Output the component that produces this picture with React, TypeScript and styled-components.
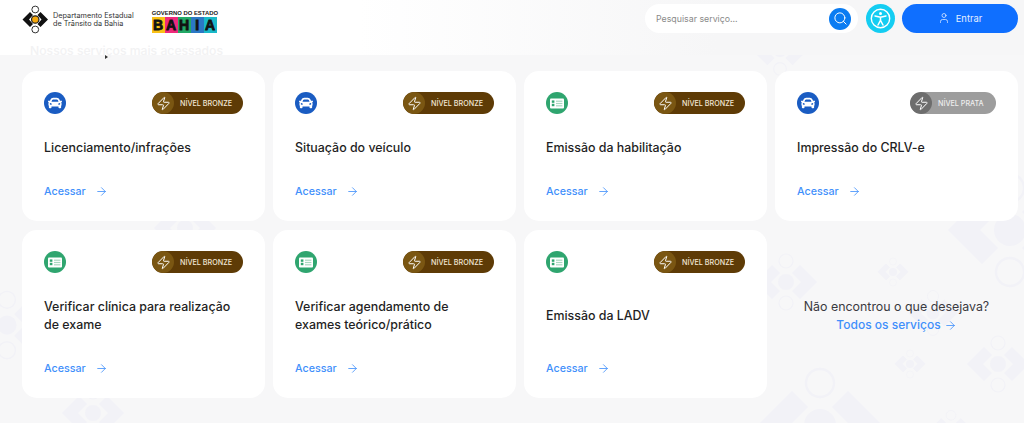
import React from "react";
import styled, { createGlobalStyle } from "styled-components";
import { ArrowRight, Search, User, Zap } from "lucide-react";
import { FaCar } from "react-icons/fa";

const GlobalStyle = createGlobalStyle`
  html, body {
    margin: 0;
    padding: 0;
    height: 100%;
    background: #f7f7f8;
    font-family: "Inter", "Liberation Sans", sans-serif;
    overflow: hidden;
  }
  * { box-sizing: border-box; }
`;

const Page = styled.div`
  position: relative;
  width: 1024px;
  height: 423px;
  overflow: hidden;
  background: #f7f7f8;
`;

const Pattern = styled.svg`
  position: absolute;
  inset: 0;
  width: 1024px;
  height: 423px;
`;

const Header = styled.header`
  position: relative;
  height: 55px;
  display: flex;
  align-items: flex-start;
  justify-content: space-between;
  padding: 3px 6px 0 22px;
  background: linear-gradient(90deg, #ffffff 0%, #ffffff 35%, #f6f6f7 70%, #f6f6f7 100%);
`;

const Brand = styled.div`
  display: flex;
  align-items: center;
  gap: 19px;
  height: 33px;
`;

const Detran = styled.div`
  display: flex;
  align-items: center;
  gap: 4px;
`;

const DetranName = styled.div`
  font-size: 7.3px;
  line-height: 7.6px;
  color: #333;
  white-space: nowrap;
`;

const BahiaLogo = styled.div`
  display: flex;
  flex-direction: column;
  width: 65px;
  margin-left: -1px;
  padding-top: 4px;
`;

const BahiaTop = styled.div`
  font-family: "Liberation Sans", sans-serif;
  font-size: 5.9px;
  font-weight: 700;
  line-height: 7px;
  color: #1a1a1a;
  white-space: nowrap;
`;

const BahiaWord = styled.div`
  display: flex;
  height: 16px;
  background: #111;
`;

const BahiaLetter = styled.span<{ $color: string }>`
  flex: 1;
  text-align: center;
  font-family: "Liberation Sans", sans-serif;
  font-size: 14px;
  font-weight: 700;
  line-height: 16px;
  color: #111;
  -webkit-text-stroke: 0.8px #111;
  background: ${({ $color }) => $color};
`;

const Actions = styled.div`
  display: flex;
  align-items: center;
  height: 30px;
`;

const SearchBox = styled.div`
  width: 213px;
  height: 29px;
  margin-top: 1px;
  display: flex;
  align-items: center;
  justify-content: space-between;
  padding: 0 7px 0 11px;
  border-radius: 15px;
  background: #fff;
`;

const SearchHint = styled.span`
  font-size: 8.8px;
  color: #8a8a8a;
  white-space: nowrap;
`;

const SearchButton = styled.button`
  width: 22px;
  height: 22px;
  padding: 0;
  border: none;
  border-radius: 50%;
  display: flex;
  align-items: center;
  justify-content: center;
  background: #0b7cf2;
  color: #fff;
`;

const A11yButton = styled.button`
  width: 29px;
  height: 29px;
  margin: 1px 7px 0 8px;
  padding: 0;
  border: none;
  border-radius: 50%;
  display: flex;
  align-items: center;
  justify-content: center;
  background: #14cdf2;
`;

const LoginButton = styled.button`
  width: 116px;
  height: 29px;
  border: none;
  border-radius: 15px;
  display: flex;
  align-items: center;
  justify-content: center;
  gap: 6px;
  background: #0f6fff;
  color: #e4eeff;
  font-family: inherit;
  font-size: 9.4px;
`;

const SectionTitle = styled.h2`
  position: relative;
  margin: -12px 0 0 30px;
  height: 28px;
  font-size: 12.2px;
  line-height: 16px;
  font-weight: 500;
  color: #f2f2f3;
`;

const Speck = styled.span`
  position: absolute;
  left: 75px;
  top: 12px;
  width: 0;
  height: 0;
  border-left: 3px solid #333;
  border-top: 2px solid transparent;
  border-bottom: 2px solid transparent;
`;

const Grid = styled.main`
  position: relative;
  display: grid;
  grid-template-columns: repeat(4, 243px);
  column-gap: 8px;
  row-gap: 9px;
  padding-left: 22px;
`;

const Card = styled.article`
  display: flex;
  flex-direction: column;
  padding: 21px 22px;
  border-radius: 15px;
  background: #fff;
`;

const CardHead = styled.div`
  display: flex;
  align-items: center;
  justify-content: space-between;
  height: 22px;
`;

const IconDisc = styled.span<{ $color: string }>`
  width: 22px;
  height: 22px;
  border-radius: 50%;
  display: flex;
  align-items: center;
  justify-content: center;
  color: #fff;
  background: ${({ $color }) => $color};
`;

const Badge = styled.span<{ $silver?: boolean }>`
  width: ${({ $silver }) => ($silver ? "86px" : "91px")};
  height: 22px;
  display: flex;
  align-items: center;
  border-radius: 11px;
  overflow: hidden;
  color: ${({ $silver }) => ($silver ? "#eeeeee" : "#f1e7d6")};
  background: ${({ $silver }) => ($silver ? "#9d9d9d" : "#5e3b06")};
`;

const BadgeBolt = styled.span<{ $silver?: boolean }>`
  width: 22px;
  height: 22px;
  flex: none;
  border-radius: 50%;
  display: flex;
  align-items: center;
  justify-content: center;
  color: #fff;
  background: ${({ $silver }) => ($silver ? "#6d6d6d" : "#7a5612")};
`;

const BadgeText = styled.span`
  margin-left: 6px;
  font-size: 7.2px;
  font-weight: 500;
  white-space: nowrap;
`;

const CardBody = styled.div`
  flex: 1;
  display: flex;
  align-items: center;
  margin: 25px 0 25px;
`;

const CardTitle = styled.h3`
  margin: 0;
  font-size: 12.4px;
  line-height: 18px;
  font-weight: 500;
  color: #1f1f24;
`;

const AccessLink = styled.a`
  display: flex;
  align-items: center;
  gap: 9px;
  height: 18px;
  font-size: 10.7px;
  font-weight: 500;
  color: #3f8ffb;
`;

const MoreCell = styled.div`
  display: flex;
  flex-direction: column;
  align-items: center;
  justify-content: center;
  padding-top: 4px;
  line-height: 18px;
`;

const MoreText = styled.div`
  font-size: 12.4px;
  color: #3a3a3f;
`;

const MoreLink = styled.a`
  display: flex;
  align-items: center;
  gap: 3px;
  font-size: 12px;
  font-weight: 500;
  color: #3f8ffb;
`;

const Motif = ({ x, y, s = 1 }: { x: number; y: number; s?: number }) => (
  <g transform={`translate(${x} ${y}) scale(${s})`}>
    <path d="M31 0 L14 -17 L6 -9 L15 0 L6 9 L14 17 Z" fill="#f2f2f7" />
    <path d="M-31 0 L-14 -17 L-6 -9 L-15 0 L-6 9 L-14 17 Z" fill="#f2f2f7" />
    <circle r="8" fill="#f2f2f7" />
    <circle cy="-21" r="7" fill="none" stroke="#f2f2f7" strokeWidth="1.2" />
    <circle cy="21" r="7" fill="none" stroke="#f2f2f7" strokeWidth="1.2" />
  </g>
);

const DetranMark = () => (
  <svg width="27" height="29" viewBox="0 0 27 29">
    <path d="M0.5 14.5 L8 7 L11 10 L7 14.5 L11 19 L8 22 Z" fill="#111" />
    <path d="M26 14.5 L18.5 7 L15.5 10 L19.5 14.5 L15.5 19 L18.5 22 Z" fill="#111" />
    <circle cx="13.25" cy="14.5" r="3.7" fill="#f5a80d" stroke="#222" strokeWidth="1.2" />
    <circle cx="13.25" cy="4.5" r="3.4" fill="#fff" stroke="#333" strokeWidth="1" />
    <circle cx="13.25" cy="24.5" r="3.4" fill="#fff" stroke="#333" strokeWidth="1" />
  </svg>
);

const IdCard = () => (
  <svg width="14" height="11" viewBox="0 0 14 11">
    <rect x="0" y="0.5" width="14" height="10" rx="1" fill="#fff" />
    <rect x="1.8" y="2.4" width="2.6" height="2.4" fill="#2fa56f" />
    <rect x="1.8" y="5.8" width="2.6" height="2.4" fill="#2fa56f" />
    <rect x="6" y="2.6" width="6.4" height="1.2" fill="#a8d8c0" />
    <rect x="6" y="4.9" width="6.4" height="1.2" fill="#a8d8c0" />
    <rect x="6" y="7.2" width="6.4" height="1.2" fill="#a8d8c0" />
  </svg>
);

const A11yIcon = () => (
  <svg width="21" height="21" viewBox="0 0 21 21" fill="none" stroke="#fff">
    <circle cx="10.5" cy="10.5" r="9.2" strokeWidth="1.4" />
    <circle cx="10.5" cy="5.6" r="1.5" fill="#fff" stroke="none" />
    <path d="M5 8 L10.5 9.2 L16 8 M10.5 9.2 V12.4 M10.5 12.4 L8 17 M10.5 12.4 L13 17" strokeWidth="1.5" strokeLinecap="round" />
  </svg>
);

type Service = {
  title: React.ReactNode;
  kind: "car" | "id";
  silver?: boolean;
};

const services: Service[] = [
  { title: "Licenciamento/infrações", kind: "car" },
  { title: "Situação do veículo", kind: "car" },
  { title: "Emissão da habilitação", kind: "id" },
  { title: "Impressão do CRLV-e", kind: "car", silver: true },
  { title: "Verificar clínica para realização de exame", kind: "id" },
  { title: "Verificar agendamento de exames teórico/prático", kind: "id" },
  { title: "Emissão da LADV", kind: "id" },
];

const patternSpots = [
  { x: 786, y: 282, s: 1 },
  { x: 893, y: 272, s: 0.5 },
  { x: 910, y: 364, s: 0.5 },
  { x: 998, y: 364, s: 1 },
  { x: 933, y: 313, s: 0.8 },
  { x: 820, y: 425, s: 2 },
  { x: 1010, y: 230, s: 2 },
  { x: 93, y: 413, s: 1 },
  { x: 7, y: 325, s: 1.2 },
  { x: 780, y: 50, s: 0.9 },
  { x: 185, y: 228, s: 1 },
  { x: 951, y: 430, s: 0.7 },
];

export default function App() {
  return (
    <Page>
      <GlobalStyle />
      <Pattern viewBox="0 0 1024 423">
        {patternSpots.map((spot) => (
          <Motif key={`${spot.x}-${spot.y}`} x={spot.x} y={spot.y} s={spot.s} />
        ))}
      </Pattern>

      <Header>
        <Brand>
          <Detran>
            <DetranMark />
            <DetranName>
              Departamento Estadual
              <br />
              de Trânsito da Bahia
            </DetranName>
          </Detran>
          <BahiaLogo>
            <BahiaTop>GOVERNO DO ESTADO</BahiaTop>
            <BahiaWord>
              <BahiaLetter $color="#f9c116">B</BahiaLetter>
              <BahiaLetter $color="#ee2a7b">A</BahiaLetter>
              <BahiaLetter $color="#22a866">H</BahiaLetter>
              <BahiaLetter $color="#2b78c5">I</BahiaLetter>
              <BahiaLetter $color="#19b9c9">A</BahiaLetter>
            </BahiaWord>
          </BahiaLogo>
        </Brand>
        <Actions>
          <SearchBox>
            <SearchHint>Pesquisar serviço...</SearchHint>
            <SearchButton>
              <Search size={15} strokeWidth={1.6} />
            </SearchButton>
          </SearchBox>
          <A11yButton>
            <A11yIcon />
          </A11yButton>
          <LoginButton>
            <User size={12} strokeWidth={1.5} />
            Entrar
          </LoginButton>
        </Actions>
      </Header>

      <SectionTitle>
        Nossos serviços mais acessados
        <Speck />
      </SectionTitle>

      <Grid>
        {services.map((service, index) => (
          <Card key={index}>
            <CardHead>
              <IconDisc $color={service.kind === "car" ? "#1a5cc2" : "#2fa56f"}>
                {service.kind === "car" ? <FaCar size={14} /> : <IdCard />}
              </IconDisc>
              <Badge $silver={service.silver}>
                <BadgeBolt $silver={service.silver}>
                  <Zap size={15} strokeWidth={1.6} />
                </BadgeBolt>
                <BadgeText>{service.silver ? "NÍVEL PRATA" : "NÍVEL BRONZE"}</BadgeText>
              </Badge>
            </CardHead>
            <CardBody>
              <CardTitle>{service.title}</CardTitle>
            </CardBody>
            <AccessLink>
              Acessar
              <ArrowRight size={13} strokeWidth={1.5} />
            </AccessLink>
          </Card>
        ))}
        <MoreCell>
          <MoreText>Não encontrou o que desejava?</MoreText>
          <MoreLink>
            Todos os serviços
            <ArrowRight size={13} strokeWidth={1.5} />
          </MoreLink>
        </MoreCell>
      </Grid>
    </Page>
  );
}
